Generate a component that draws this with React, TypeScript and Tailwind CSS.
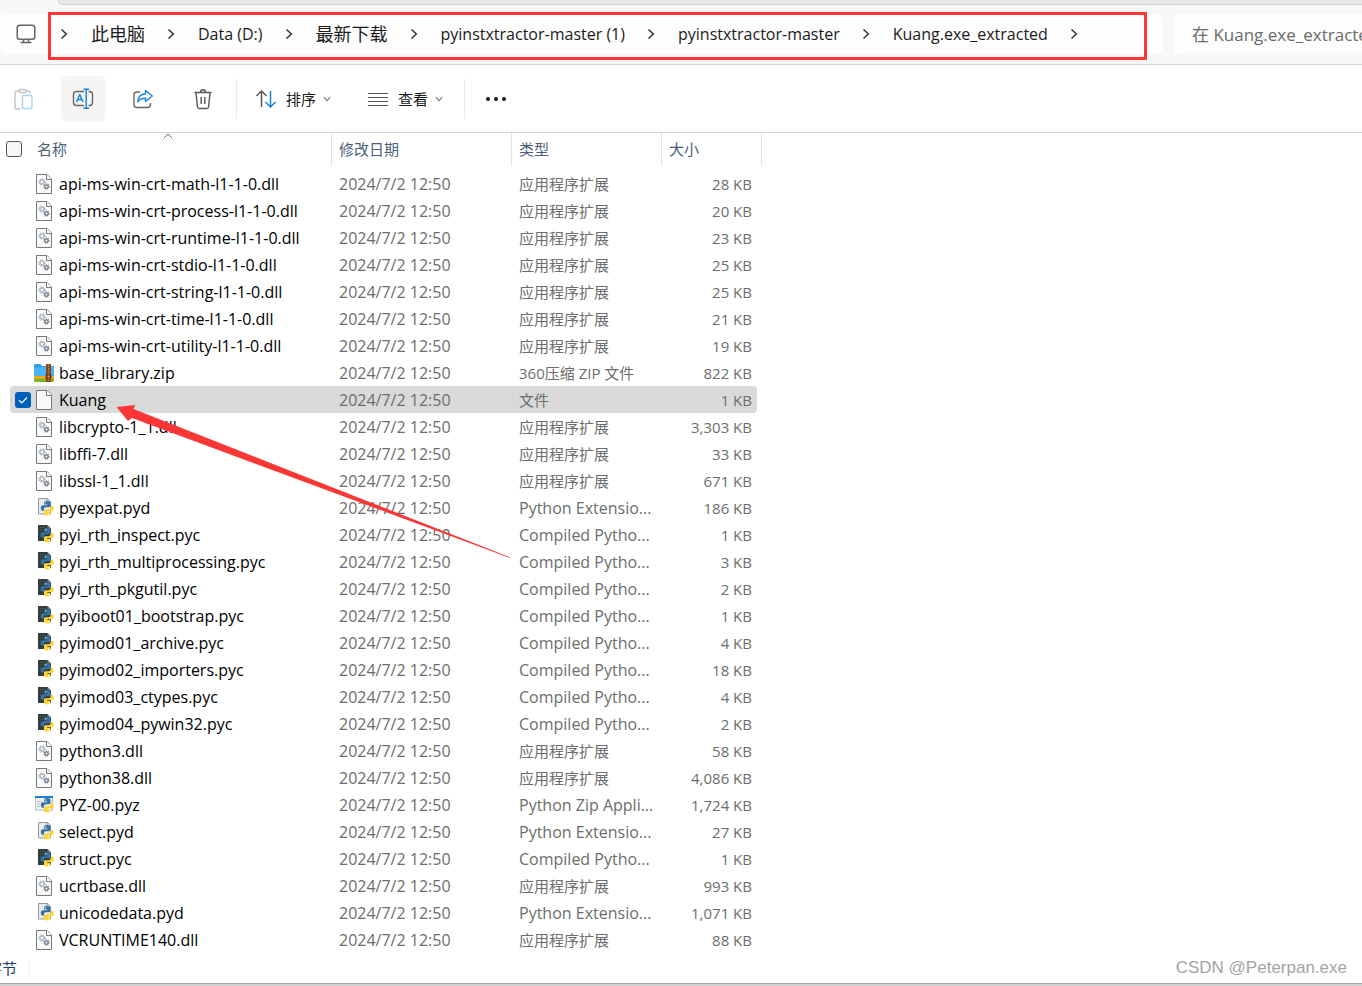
import React, { useState } from "react";

type Kind = "dll" | "zip" | "file" | "pyd" | "pyc" | "pyz";

interface FileRow {
    name: string;
    kind: Kind;
    size: string;
}

const DATE = "2024/7/2 12:50";

const typeNames: Record<Kind, string> = {
    dll: "应用程序扩展",
    zip: "360压缩 ZIP 文件",
    file: "文件",
    pyd: "Python Extensio...",
    pyc: "Compiled Pytho...",
    pyz: "Python Zip Appli...",
};

const files: FileRow[] = [
    { name: "api-ms-win-crt-math-l1-1-0.dll", kind: "dll", size: "28 KB" },
    { name: "api-ms-win-crt-process-l1-1-0.dll", kind: "dll", size: "20 KB" },
    { name: "api-ms-win-crt-runtime-l1-1-0.dll", kind: "dll", size: "23 KB" },
    { name: "api-ms-win-crt-stdio-l1-1-0.dll", kind: "dll", size: "25 KB" },
    { name: "api-ms-win-crt-string-l1-1-0.dll", kind: "dll", size: "25 KB" },
    { name: "api-ms-win-crt-time-l1-1-0.dll", kind: "dll", size: "21 KB" },
    { name: "api-ms-win-crt-utility-l1-1-0.dll", kind: "dll", size: "19 KB" },
    { name: "base_library.zip", kind: "zip", size: "822 KB" },
    { name: "Kuang", kind: "file", size: "1 KB" },
    { name: "libcrypto-1_1.dll", kind: "dll", size: "3,303 KB" },
    { name: "libffi-7.dll", kind: "dll", size: "33 KB" },
    { name: "libssl-1_1.dll", kind: "dll", size: "671 KB" },
    { name: "pyexpat.pyd", kind: "pyd", size: "186 KB" },
    { name: "pyi_rth_inspect.pyc", kind: "pyc", size: "1 KB" },
    { name: "pyi_rth_multiprocessing.pyc", kind: "pyc", size: "3 KB" },
    { name: "pyi_rth_pkgutil.pyc", kind: "pyc", size: "2 KB" },
    { name: "pyiboot01_bootstrap.pyc", kind: "pyc", size: "1 KB" },
    { name: "pyimod01_archive.pyc", kind: "pyc", size: "4 KB" },
    { name: "pyimod02_importers.pyc", kind: "pyc", size: "18 KB" },
    { name: "pyimod03_ctypes.pyc", kind: "pyc", size: "4 KB" },
    { name: "pyimod04_pywin32.pyc", kind: "pyc", size: "2 KB" },
    { name: "python3.dll", kind: "dll", size: "58 KB" },
    { name: "python38.dll", kind: "dll", size: "4,086 KB" },
    { name: "PYZ-00.pyz", kind: "pyz", size: "1,724 KB" },
    { name: "select.pyd", kind: "pyd", size: "27 KB" },
    { name: "struct.pyc", kind: "pyc", size: "1 KB" },
    { name: "ucrtbase.dll", kind: "dll", size: "993 KB" },
    { name: "unicodedata.pyd", kind: "pyd", size: "1,071 KB" },
    { name: "VCRUNTIME140.dll", kind: "dll", size: "88 KB" },
];

const crumbs = [
    "此电脑",
    "Data (D:)",
    "最新下载",
    "pyinstxtractor-master (1)",
    "pyinstxtractor-master",
    "Kuang.exe_extracted",
];

// Latin and Chinese labels are set in different sizes
const isLatin = (text: string) => /^[\x20-\x7e]+$/.test(text);

const Chevron = () => (
    <svg viewBox="0 0 8 12" className="h-3 w-2 shrink-0" fill="none" stroke="#333" strokeWidth="1.5">
        <path d="M1.5 1.5 6.3 6 1.5 10.5" />
    </svg>
);

const ChevronDown = () => (
    <svg viewBox="0 0 8 6" className="h-[6px] w-2" fill="none" stroke="#777" strokeWidth="1.1">
        <path d="M.8 1.2 4 4.6 7.2 1.2" />
    </svg>
);

const PythonLogo = () => (
    <g transform="translate(.4 -2)">
        <path
            fill="#3572a5"
            d="M12.6 6c-2.3 0-2.9.8-2.9 2v1.5h3.2v.7H8.7c-1.5 0-2.3 1-2.3 2.8 0 1.9.8 2.7 2 2.7h1.1v-1.4c0-1.2.9-2 2-2h2.9c1.1 0 1.7-.7 1.7-1.7V8c0-1.2-1-2-3.5-2z"
        />
        <path
            fill="#ffd43b"
            d="M13.1 20.5c2.3 0 2.9-.8 2.9-2V17h-3.2v-.7h4.2c1.5 0 2.3-1 2.3-2.8 0-1.9-.8-2.7-2-2.7h-1.1v1.4c0 1.2-.9 2-2 2h-2.9c-1.1 0-1.7.7-1.7 1.7v2.6c0 1.2 1 2 3.5 2z"
        />
        <circle cx="11.3" cy="7.8" r=".6" fill="#fff" />
        <circle cx="14.5" cy="18.7" r=".6" fill="#fff" />
    </g>
);

const Page = () => (
    <g>
        <path d="M2.5 1.5h10.5l4.5 4.5v14.5h-15z" fill="#fafafa" stroke="#777" />
        <path d="M12.5 1.5v5h5" fill="#fff" stroke="#777" />
    </g>
);

const FileIcon = ({ kind }: { kind: Kind }) => (
    <svg viewBox="0 0 20 22" className="h-[22px] w-5 shrink-0" fill="none" aria-hidden="true">
        {kind === "file" && <Page />}
        {kind === "dll" && (
            <>
                <Page />
                <circle cx="8" cy="9" r="2.9" stroke="#a9b4c0" strokeWidth="1.4" strokeDasharray="1.5 .78" />
                <circle cx="8" cy="9" r="1.9" stroke="#a3afbc" strokeWidth="1" />
                <circle cx="12.5" cy="13.5" r="2.4" stroke="#66717c" strokeWidth="1.2" strokeDasharray="1.2 .68" />
                <circle cx="12.5" cy="13.5" r="1.5" stroke="#5c6670" strokeWidth="1" />
            </>
        )}
        {kind === "zip" && (
            <>
                <path d="M0 3.5c0-.8.5-1.5 1.3-1.5h5l2 2H20v11H0z" fill="#2da0ee" />
                <path d="M0 5.5h11l2-1.5H20v10H0z" fill="#48b5f8" />
                <path d="M0 14h20v3.2H0z" fill="#f6a51c" />
                <path d="M0 16.8h20v1.7c0 .8-.6 1.5-1.4 1.5H1.4C.6 20 0 19.3 0 18.5z" fill="#77b52b" />
                <path d="M12 2h5v18h-5z" fill="#8a4a17" />
                <path d="M14.5 2v18" stroke="#d59a50" strokeDasharray="1 1" />
                <path d="M11.5 12.5h6v4h-6z" fill="#6b3410" />
                <path d="M13.5 13.5h2v2h-2z" fill="#e8a33d" />
            </>
        )}
        {kind === "pyd" && (
            <>
                <path d="M4.5 1.5h9l3 3v12.5h-12z" fill="#e9ecef" stroke="#999" />
                <path d="M13 1.5v3.5h3.5" stroke="#888" />
                <PythonLogo />
            </>
        )}
        {kind === "pyc" && (
            <>
                <path d="M4 1h9.5L17 4.5V17H4z" fill="#333b3c" />
                <path d="M6 3.5h5M6 6h3M6 9h2M6 12h2" stroke="#3f6d4b" strokeDasharray="1 1" />
                <path d="M13.5 1v3.5H17" fill="#777" />
                <PythonLogo />
            </>
        )}
        {kind === "pyz" && (
            <>
                <path d="M1.5 2.5h17v13.5h-17z" fill="#eef2f5" stroke="#b7bdc3" />
                <path d="M1 2h18v2H1z" fill="#1b7fd4" />
                <path d="M3 7.5h5M3 10h3M3 12.5h3" stroke="#b7bdc3" />
                <PythonLogo />
            </>
        )}
    </svg>
);

const ToolButton = ({ label, active, children }: { label: string; active?: boolean; children: React.ReactNode }) => (
    <button
        type="button"
        aria-label={label}
        className={`flex size-[45px] items-center justify-center rounded-md ${active ? "bg-[#f5f5f5]" : ""}`}
    >
        <svg viewBox="0 0 24 22" className="h-[22px] w-6" fill="none" strokeWidth="1.4" strokeLinejoin="round">
            {children}
        </svg>
    </button>
);

const Toolbar = () => (
    <div className="flex h-[68px] items-center border-b border-[#d4d4d4] pl-px text-[15px] text-[#1b1b1b]">
        <div className="flex gap-[15px]">
            <ToolButton label="粘贴">
                <path d="M8 3H4.500A1.500 1.500 0 0 0 3 4.500v15A1.500 1.500 0 0 0 4.500 21H8.500M14 3h2.500A1.500 1.500 0 0 1 18 4.500V5" stroke="#c4c4c4" />
                <rect x="7" y="1.5" width="7" height="3" rx="1.5" stroke="#c4c4c4" />
                <rect x="10.5" y="7.5" width="9.5" height="13" rx="1.5" stroke="#a9d3f2" />
            </ToolButton>
            <ToolButton label="重命名" active>
                <path d="M12 3.5H4.5A3 3 0 0 0 1.5 6.5v8a3 3 0 0 0 3 3H12M16.5 3.5h1a3 3 0 0 1 3 3v8a3 3 0 0 1-3 3h-1" stroke="#666" />
                <path d="M4.5 14 7.8 6.5 11 14M5.6 11.5h4.4M14.2 1.5v18.5M11.5 1.2h5.5M11.5 20.3h5.5" stroke="#1482d8" />
            </ToolButton>
            <ToolButton label="共享">
                <path d="M8 4H5a3 3 0 0 0-3 3v9.5a3 3 0 0 0 3 3h10.5a3 3 0 0 0 3-3V15" stroke="#666" />
                <path d="M13.5 2.5 20.3 8l-6.8 5.5v-3.3c-3.5-.2-5.8 1-7.7 3.6.3-4.5 3-7.6 7.7-8z" stroke="#1482d8" />
            </ToolButton>
            <ToolButton label="删除">
                <path d="M2.5 4.5h17M8.5 4.3a2.500 2.500 0 0 1 5 0M4 4.8l1.400 13.900A2 2 0 0 0 7.400 20.500h7.200a2 2 0 0 0 2-1.800L18 4.800M9.200 9v7M12.800 9v7" stroke="#555" />
            </ToolButton>
        </div>
        <div className="ml-[10px] h-10 w-px bg-[#e8e8e8]" />
        <button type="button" className="ml-[18px] flex items-center">
            <svg viewBox="0 0 22 20" className="h-5 w-[22px]" fill="none" strokeWidth="1.5">
                <path d="M6.5 18V2M1.5 7l5-5 5 5" stroke="#555" />
                <path d="M15.5 2v16M10.5 13l5 5 5-5" stroke="#1482d8" />
            </svg>
            <span className="ml-[9px]">排序</span>
            <span className="ml-[7px]"><ChevronDown /></span>
        </button>
        <button type="button" className="ml-[37px] flex items-center">
            <svg viewBox="0 0 20 16" className="h-4 w-5" stroke="#555" strokeWidth="1.2">
                <path d="M0 2.5h20M0 6.5h20M0 10.5h20M0 14.5h20" />
            </svg>
            <span className="ml-[10px]">查看</span>
            <span className="ml-[7px]"><ChevronDown /></span>
        </button>
        <div className="ml-[21px] h-10 w-px bg-[#e8e8e8]" />
        <button type="button" aria-label="更多" className="ml-5">
            <svg viewBox="0 0 22 6" className="h-[6px] w-[22px]" fill="#1b1b1b">
                <circle cx="3" cy="3" r="2" />
                <circle cx="11" cy="3" r="2" />
                <circle cx="19" cy="3" r="2" />
            </svg>
        </button>
    </div>
);

const AddressBar = () => (
    <header className="border-b border-[#d2d2d2] bg-[#f7f7f7] pb-[9px]">
        <div className="ml-[58px] h-[5px] rounded-bl-md border-b border-l border-[#d0d0d0] bg-[#e8e8e8]" />
        <div className="mt-[9px] flex gap-[11px]">
            <nav className="relative flex h-10 min-w-0 flex-1 items-center rounded-md bg-[#fdfdfd] pl-4 text-[#1b1b1b]">
                <svg viewBox="0 0 20 20" className="size-5 shrink-0" fill="none" stroke="#666" strokeWidth="1.5">
                    <rect x="1.2" y="1.2" width="17.6" height="14" rx="2.5" />
                    <path d="M7.5 15.5v3M12.5 15.5v3M4.5 18.5h11" />
                </svg>
                <ol className="ml-6 flex items-center gap-[22px] whitespace-nowrap">
                    {crumbs.map((crumb) => (
                        <li key={crumb} className="flex items-center gap-[23px]">
                            <Chevron />
                            <a href="#" className={isLatin(crumb) ? "text-[16px]" : "text-[18px]"}>{crumb}</a>
                        </li>
                    ))}
                    <li><Chevron /></li>
                </ol>
                <div className="pointer-events-none absolute -top-[2px] right-4 -bottom-[6px] left-12 border-3 border-[#fa3737]" />
            </nav>
            <input
                type="text"
                aria-label="搜索"
                placeholder="在 Kuang.exe_extracted 中搜索"
                className="h-[41px] w-[188px] rounded-l-md bg-[#fdfdfd] pl-[18px] text-[17px] outline-none placeholder:text-[#6b6b6b]"
            />
        </div>
    </header>
);

const headCell = "relative h-[33px] border-r border-[#e2e2e2] p-0 pb-[2px] pl-[7px] text-left font-normal";

function App() {
    const [selected, setSelected] = useState("Kuang");

    return (
        <div className="relative flex min-h-screen flex-col overflow-hidden bg-white font-['Open_Sans','Noto_Sans_CJK_SC',sans-serif] text-[15px] leading-5">
            <AddressBar />
            <Toolbar />
            <main className="flex-1">
                <table className="w-[762px] table-fixed border-separate border-spacing-0">
                    <colgroup>
                        <col className="w-[332px]" />
                        <col className="w-[180px]" />
                        <col className="w-[150px]" />
                        <col className="w-[100px]" />
                    </colgroup>
                    <thead className="text-[#4c607a]">
                        <tr>
                            <th className={headCell}>
                                <div className="flex items-center gap-[15px]">
                                    <input
                                        type="checkbox"
                                        aria-label="全选"
                                        className="-ml-px size-4 appearance-none rounded-[3px] border border-[#555] bg-[#f6f6f6]"
                                    />
                                    名称
                                </div>
                                <svg viewBox="0 0 10 6" className="absolute top-0 left-[163px] h-[6px] w-[10px]" fill="none" stroke="#666">
                                    <path d="M.8 5.2 5 1l4.2 4.2" />
                                </svg>
                            </th>
                            <th className={headCell}>修改日期</th>
                            <th className={headCell}>类型</th>
                            <th className={headCell}>大小</th>
                        </tr>
                    </thead>
                    <tbody className="text-[#6d6d6d]">
                        <tr aria-hidden="true">
                            <td colSpan={4} className="h-1 p-0" />
                        </tr>
                        {files.map((file) => {
                            const isSelected = file.name === selected;
                            const fill = isSelected ? "bg-[#d9d9d9]" : "";
                            const typeName = typeNames[file.kind];
                            return (
                                <tr key={file.name} onClick={() => setSelected(file.name)}>
                                    <td className="p-0">
                                        <div className={`ml-[10px] flex h-[27px] items-center rounded-l-sm pl-[5px] text-[16px] text-black ${fill}`}>
                                            <span className="relative mr-[3px] size-4">
                                                {isSelected && (
                                                    <>
                                                        <input
                                                            type="checkbox"
                                                            aria-label={file.name}
                                                            checked
                                                            readOnly
                                                            className="block size-4 appearance-none rounded-[3px] bg-[#005fb8]"
                                                        />
                                                        <svg viewBox="0 0 16 16" className="pointer-events-none absolute inset-0" fill="none" stroke="#fff" strokeWidth="1.2">
                                                            <path d="m4 8.3 2.8 2.7L12 5.5" />
                                                        </svg>
                                                    </>
                                                )}
                                            </span>
                                            <FileIcon kind={file.kind} />
                                            <span className="ml-[5px]">{file.name}</span>
                                        </div>
                                    </td>
                                    <td className="p-0">
                                        <div className={`flex h-[27px] items-center pl-[7px] text-[16px] ${fill}`}>{DATE}</div>
                                    </td>
                                    <td className="p-0">
                                        <div className={`flex h-[27px] items-center pl-[7px] whitespace-nowrap ${isLatin(typeName) ? "text-[16px]" : "text-[15px]"} ${fill}`}>
                                            {typeName}
                                        </div>
                                    </td>
                                    <td className="p-0">
                                        <div className={`mr-[5px] flex h-[27px] items-center justify-end rounded-r-sm pr-[5px] ${fill}`}>{file.size}</div>
                                    </td>
                                </tr>
                            );
                        })}
                    </tbody>
                </table>
            </main>
            <footer className="border-b-2 border-[#d0d0d0]">
                <div className="flex h-[31px] items-center border-b border-[#aaa]">
                    <span className="-ml-[13px] text-[#1f3b63]">字节</span>
                    <span className="ml-3 h-3 w-px bg-[#eee]" />
                    <span className="mr-[15px] ml-auto font-['Liberation_Sans',sans-serif] text-[17px] text-[#a3a3a3]">CSDN @Peterpan.exe</span>
                </div>
            </footer>

            {/* hand-drawn pointer towards the selected row */}
            <svg viewBox="0 0 394 154" className="pointer-events-none absolute top-[404px] left-[116px] h-[154px] w-[394px]" fill="#fa3737">
                <path d="M.5 3 19 1l-1.500 4L394 153.300v.7L16 14l-4 3z" />
            </svg>
        </div>
    );
}

export default App;
